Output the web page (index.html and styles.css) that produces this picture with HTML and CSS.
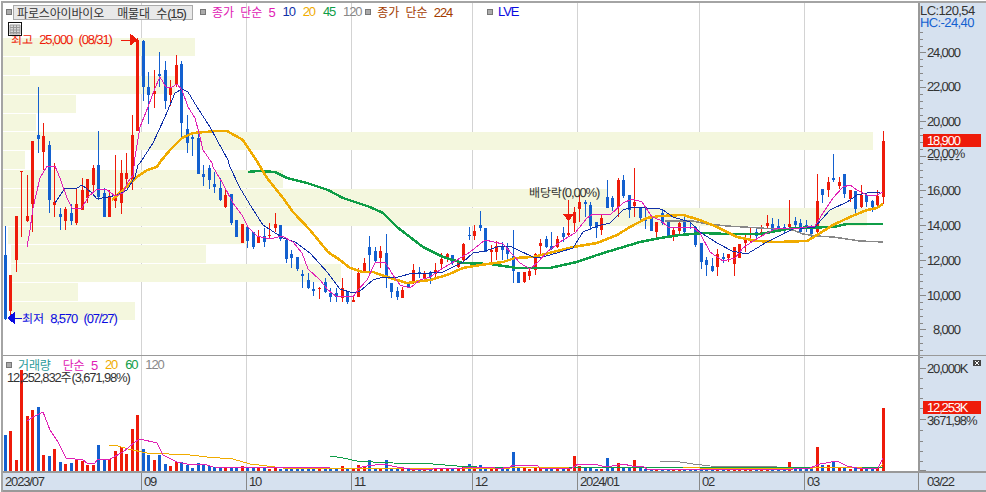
FILE: index.html
```html
<!DOCTYPE html>
<html lang="ko">
<head>
<meta charset="utf-8">
<title>파로스아이바이오 차트</title>
<link rel="stylesheet" href="styles.css">
</head>
<body>
<div class="chart">
  <section class="plot">
    <svg class="canvas" viewBox="3 3 915 352" width="915" height="352">
      <path class="grid" d="M141.5 3V355M246.5 3V355M351.5 3V355M472.5 3V355M577.5 3V355M699.5 3V355M804.5 3V355"/>
      <g class="profile">
        <rect x="3" y="38" width="192" height="18"/><rect x="3" y="57" width="27" height="18"/>
        <rect x="3" y="76" width="172" height="18"/><rect x="3" y="95" width="73" height="18"/>
        <rect x="3" y="114" width="33" height="17"/><rect x="3" y="132" width="870" height="18"/>
        <rect x="3" y="151" width="22" height="18"/><rect x="3" y="170" width="280" height="18"/>
        <rect x="3" y="189" width="604" height="18"/><rect x="3" y="208" width="864" height="18"/>
        <rect x="8" y="227" width="240" height="17"/><rect x="11" y="245" width="195" height="18"/>
        <rect x="11" y="264" width="330" height="18"/><rect x="11" y="283" width="67" height="18"/>
        <rect x="11" y="302" width="124" height="18"/>
      </g>
      <path class="wick blue" d="M5.5 226V320M38.5 87V153M49.5 141V213M60.5 208V230M71.5 204V225M98.5 131V200M104.5 188V217M143.5 40V101M148.5 72V124M159.5 52V87M165.5 61V109M181.5 61V139M187.5 115V153M192.5 133V156M198.5 133V174M203.5 165V186M209.5 165V189M214.5 172V193M220.5 178V201M231.5 194V225M247.5 227V248M253.5 232V249M264.5 228V247M280.5 225V241M286.5 240V263M291.5 250V268M297.5 257V271M302.5 270V288M308.5 273V289M313.5 282V296M325.5 278V293M330.5 288V302M336.5 288V302M347.5 292V304M369.5 236V271M375.5 247V263M386.5 234V288M391.5 283V298M397.5 287V300M408.5 282V288M419.5 267V278M430.5 271V284M452.5 255V265M469.5 227V240M480.5 211V231M485.5 228V252M502.5 242V260M507.5 243V260M513.5 230V283M518.5 272V283M546.5 236V248M551.5 232V250M563.5 227V242M585.5 200V217M590.5 202V230M596.5 222V238M607.5 180V208M612.5 196V211M623.5 175V198M629.5 195V218M640.5 207V223M645.5 207V229M651.5 215V231M662.5 209V225M668.5 221V237M684.5 215V235M690.5 220V229M695.5 226V247M701.5 243V269M706.5 257V276M712.5 258V272M723.5 253V263M756.5 228V241M772.5 218V233M778.5 219V232M784.5 224V234M795.5 217V229M800.5 219V233M806.5 220V232M811.5 225V238M822.5 189V203M833.5 154V182M844.5 174V198M855.5 191V213M866.5 193V207M872.5 200V212"/>
      <path class="body blue" d="M5.5 255V319M38.5 135V139M49.5 145V200M60.5 214V217M71.5 213V221M98.5 165V197M104.5 193V217M143.5 41V87M148.5 87V95M159.5 74V76M165.5 70V101M181.5 64V123M187.5 129V143M192.5 137V139M198.5 138V174M203.5 174V177M209.5 168V180M214.5 184V187M220.5 188V200M231.5 194V223M236.5 220V237M247.5 227V241M253.5 232V247M264.5 236V242M280.5 225V239M286.5 240V259M291.5 254V258M297.5 257V269M302.5 274V276M308.5 280V288M313.5 289V291M325.5 282V292M330.5 293V297M336.5 293V297M347.5 292V302M369.5 247V255M375.5 251V261M386.5 253V278M391.5 283V292M397.5 291V297M408.5 283V288M419.5 272V274M430.5 272V277M452.5 255V263M469.5 235V236M480.5 225V228M485.5 228V252M502.5 247V250M507.5 248V254M513.5 256V271M518.5 272V283M546.5 239V247M551.5 246V249M563.5 233V237M585.5 202V204M590.5 205V226M596.5 222V228M607.5 197V208M612.5 198V207M623.5 180V196M629.5 195V210M640.5 207V218M645.5 219V221M651.5 216V231M662.5 213V223M668.5 222V236M684.5 220V232M690.5 227V228M695.5 227V245M701.5 243V262M706.5 260V265M712.5 266V271M723.5 257V259M756.5 232V236M772.5 224V232M778.5 226V231M784.5 227V229M795.5 221V225M800.5 223V232M806.5 225V227M811.5 227V234M822.5 189V195M833.5 178V180M844.5 174V194M855.5 191V209M866.5 195V202M872.5 201V207"/>
      <path class="wick red" d="M10.5 275V317M16.5 216V272M21.5 171V237M27.5 175V222M32.5 141V232M43.5 123V170M54.5 163V217M65.5 207V230M76.5 188V225M82.5 178V210M87.5 179V203M93.5 165V192M109.5 190V217M115.5 155V208M121.5 160V214M126.5 153V188M132.5 115V190M137.5 38V131M154.5 70V108M170.5 80V106M176.5 55V87M225.5 188V208M258.5 230V243M269.5 223V239M275.5 213V232M319.5 287V299M342.5 278V302M353.5 295V302M358.5 268V297M364.5 258V273M380.5 246V268M402.5 287V298M413.5 264V284M424.5 271V282M435.5 263V277M441.5 253V268M447.5 253V262M458.5 259V268M463.5 243V263M474.5 225V240M491.5 245V262M496.5 241V260M524.5 272V283M529.5 268V280M535.5 253V275M540.5 239V254M557.5 236V248M568.5 200V237M574.5 207V232M579.5 195V222M601.5 215V235M618.5 178V217M634.5 168V217M656.5 222V237M673.5 227V241M679.5 220V236M717.5 249V276M728.5 254V262M734.5 247V276M739.5 244V258M745.5 235V252M750.5 227V243M761.5 225V236M767.5 215V229M789.5 200V229M817.5 174V233M828.5 177V197M839.5 177V189M850.5 190V202M861.5 185V208M877.5 190V206M883.5 131V204"/>
      <path class="body red" d="M10.5 275V311M16.5 216V260M21.5 171V172M27.5 216V221M32.5 141V204M43.5 136V152M54.5 202V205M65.5 209V221M76.5 204V223M82.5 190V210M87.5 179V198M93.5 168V185M109.5 196V217M115.5 197V201M121.5 173V203M126.5 173V179M132.5 135V180M137.5 40V131M154.5 91V94M170.5 88V95M176.5 65V84M225.5 195V207M242.5 224V243M258.5 236V243M269.5 235V236M275.5 224V228M319.5 288V289M342.5 288V298M353.5 300V302M358.5 273V297M364.5 263V272M380.5 251V258M402.5 290V298M413.5 270V282M424.5 274V278M435.5 270V274M441.5 259V264M447.5 254V259M458.5 261V267M463.5 244V260M474.5 231V236M491.5 250V252M496.5 246V252M524.5 272V282M529.5 271V276M535.5 254V270M540.5 243V246M557.5 239V247M568.5 233V235M574.5 212V223M579.5 202V209M601.5 218V230M618.5 180V207M634.5 202V206M656.5 222V232M673.5 230V236M679.5 223V231M717.5 254V267M728.5 254V258M734.5 247V264M739.5 244V258M745.5 240V243M750.5 233V234M761.5 232V234M767.5 223V226M789.5 224V227M817.5 201V232M828.5 182V190M839.5 182V186M850.5 190V199M861.5 195V207M877.5 196V205M883.5 141V197"/>
      <polyline class="line ma120" points="665,221 693,221 707,224 727,226 760,228 793,230 803,234 817,236 833,237 860,241 883,242"/>
      <polyline class="line ma60" points="248,172 257,171 275,172 287,178 307,183 328,190 343,198 370,207 383,213 397,227 423,247 443,257 463,263 490,264 517,268 550,268 577,262 597,255 620,248 640,242 660,238 680,235 703,233 727,234 760,234 793,228 833,227 847,224 883,224"/>
      <polyline class="line ma20" points="112,200 123,190 137,177 147,170 157,167 160,162 170,150 182,138 193,133 217,131 227,131 243,140 258,163 267,178 283,198 293,212 310,230 328,252 340,260 350,268 363,272 373,272 390,278 407,283 430,280 447,275 463,268 480,265 503,262 515,258 533,257 557,251 573,247 597,243 617,235 630,227 647,218 660,216 683,215 700,220 717,227 737,237 757,241 777,242 807,241 817,235 833,225 850,217 867,210 877,208 883,204"/>
      <polyline class="line ma10" points="55,203 65,188 77,188 82,185 92,193 97,199 108,197 117,195 127,190 135,177 138,165 140,163 153,143 165,117 175,93 182,89 188,92 197,107 210,127 217,140 228,160 230,167 240,188 252,208 263,225 283,238 295,242 310,253 328,273 340,289 353,293 360,291 373,280 383,277 398,277 413,273 430,273 443,272 463,262 473,253 485,251 500,246 510,246 518,250 533,257 543,257 560,252 573,248 583,232 597,226 610,223 623,210 633,207 647,208 660,209 663,210 673,217 690,222 700,232 717,243 732,251 747,254 757,248 767,242 783,234 793,229 815,227 830,210 847,202 857,195 867,193 880,192"/>
      <polyline class="line ma5" points="27,247 30,230 33,208 40,178 47,166 55,166 60,178 67,198 72,208 82,208 88,197 97,189 107,190 115,196 123,193 128,182 133,175 135,157 140,127 148,107 155,88 160,77 166,87 172,87 177,84 182,90 188,107 195,118 199,133 203,150 212,163 213,167 222,182 233,203 242,215 248,227 257,236 270,239 282,236 293,242 302,253 308,269 320,280 328,290 336,296 353,297 358,290 367,280 375,263 385,262 393,275 400,285 410,288 420,280 430,277 443,268 457,260 470,252 485,240 503,244 513,255 520,263 530,269 538,262 547,252 560,242 575,233 587,218 593,214 610,215 623,203 632,199 642,202 652,217 660,220 668,227 677,228 693,227 700,233 710,252 723,261 735,258 743,248 753,241 767,233 777,228 800,228 815,226 823,213 833,198 843,187 850,185 857,190 867,195 877,195 883,192"/>
      <path class="mark-red" d="M121 40.500H131M130 34L137 40L130 45ZM563 214H574L568.500 220Z"/>
      <path class="mark-blue" d="M14 318.500H22M14 313L8 318L14 323Z"/>
      <text class="note red-text" x="11" y="44"><tspan class="ko">최고</tspan> 25,000 (08/31)</text>
      <text class="note blue-text" x="22" y="323"><tspan class="ko">최저</tspan> 8,570 (07/27)</text>
      <text class="note dark-text" x="529" y="197"><tspan class="ko">배당락</tspan>(0,00%)</text>
    </svg>
    <div class="legend">
      <i class="dot"></i>
      <span class="name"><span class="ko">파로스아이바이오</span><span class="ko title-gap">매물대</span> <span class="ko">수</span>(15)</span>
      <i class="dot after-name"></i>
      <span class="c-magenta m-6"><span class="ko">종가</span> <span class="ko">단순</span> 5</span>
      <span class="c-navy m-8">10</span>
      <span class="c-orange m-8">20</span>
      <span class="c-green m-8">45</span>
      <span class="c-gray m-8">120</span>
      <i class="dot m-4"></i>
      <span class="c-brown m-6"><span class="ko">종가</span> <span class="ko">단순</span> 224</span>
      <i class="dot m-35"></i>
      <span class="c-blue m-5">LVE</span>
    </div>
    <svg class="table-icon" viewBox="0 0 14 14" width="14" height="14">
      <rect x=".5" y=".5" width="13" height="13" fill="#fff" stroke="#111"/>
      <path d="M2 3H12V12H2ZM2 5.500H12M2 8H12M2 10.500H12M5.500 3V12M8.500 3V12" fill="#d8d8d8" stroke="#999"/>
    </svg>
  </section>
  <aside class="axis">
    <svg class="canvas" viewBox="920 3 66 352" width="66" height="352">
      <path class="tick" d="M920 32h3M920 39h3M920 46h3M920 52.500h6M920 59h3M920 66h3M920 73h3M920 80h3M920 87.500h6M920 94h3M920 101h3M920 108h3M920 115h3M920 121.500h6M920 128h3M920 135h3M920 142h3M920 149h3M920 156.500h6M920 163h3M920 170h3M920 177h3M920 184h3M920 190.500h6M920 197h3M920 204h3M920 211h3M920 218h3M920 225.500h6M920 232h3M920 239h3M920 246h3M920 253h3M920 260.500h6M920 267h3M920 274h3M920 281h3M920 288h3M920 295.500h6M920 302h3M920 309h3M920 316h3M920 323h3M920 329.500h6M920 336h3M920 343h3M920 350h3"/>
      <text class="red-text label corner" x="920" y="15">LC:120,54</text>
      <text class="hc label corner" x="920" y="27">HC:-24,40</text>
      <text class="label" x="927" y="57">24,000</text>
      <text class="label" x="927" y="91">22,000</text>
      <text class="label" x="927" y="126">20,000</text>
      <text class="label" x="927" y="160">18,000</text>
      <text class="label" x="927" y="195">16,000</text>
      <text class="label" x="927" y="230">14,000</text>
      <text class="label" x="927" y="265">12,000</text>
      <text class="label" x="927" y="300">10,000</text>
      <text class="label" x="933" y="334">8,000</text>
      <rect class="flag" x="923" y="134" width="58" height="13"/>
      <text class="label white" x="927" y="145">18,900</text>
      <rect class="veil" x="926" y="147" width="40" height="12"/>
      <text class="red-text label" x="927" y="158">20,00%</text>
    </svg>
  </aside>
  <section class="plot lower">
    <svg class="canvas" viewBox="3 356 915 115" width="915" height="115">
      <path class="grid" d="M141.5 356V471M246.5 356V471M351.5 356V471M472.5 356V471M577.5 356V471M699.5 356V471M804.5 356V471"/>
      <path class="body blue" d="M5.5 435V471M38.5 407V471M49.5 456V471M60.5 462V471M71.5 463V471M98.5 445V471M104.5 460V471M143.5 449V471M148.5 455V471M159.5 455V471M165.5 464V471M181.5 462V471M187.5 465V471M192.5 468V471M198.5 463V471M203.5 464V471M209.5 466V471M214.5 467V471M220.5 467V471M231.5 468V471M236.5 468V471M247.5 467V471M253.5 467V471M264.5 467V471M280.5 469V471M286.5 468V471M291.5 468V471M297.5 468V471M302.5 468V471M308.5 468V471M313.5 468V471M325.5 469V471M330.5 469V471M336.5 469V471M347.5 469V471M369.5 460V471M375.5 468V471M386.5 460V471M391.5 468V471M397.5 469V471M408.5 469V471M419.5 469V471M430.5 469V471M452.5 469V471M469.5 464V471M480.5 465V471M485.5 468V471M502.5 469V471M507.5 469V471M513.5 452V471M518.5 468V471M546.5 469V471M551.5 469V471M563.5 469V471M585.5 468V471M590.5 468V471M596.5 469V471M607.5 458V471M612.5 468V471M623.5 468V471M629.5 468V471M640.5 468V471M645.5 469V471M651.5 469V471M662.5 469V471M668.5 469V471M684.5 469V471M690.5 469V471M695.5 469V471M701.5 468V471M706.5 469V471M712.5 469V471M723.5 469V471M756.5 469V471M772.5 469V471M778.5 469V471M784.5 469V471M795.5 469V471M800.5 469V471M806.5 469V471M811.5 469V471M822.5 465V471M833.5 462V471M844.5 468V471M855.5 468V471M866.5 469V471M872.5 469V471"/>
      <path class="body red" d="M10.5 431V471M16.5 460V471M21.5 370V471M27.5 416V471M32.5 410V471M43.5 455V471M54.5 449V471M65.5 464V471M76.5 460V471M82.5 461V471M87.5 465V471M93.5 465V471M109.5 459V471M115.5 451V471M121.5 447V471M126.5 454V471M132.5 429V471M137.5 415V471M154.5 460V471M170.5 466V471M176.5 462V471M225.5 467V471M242.5 466V471M258.5 468V471M269.5 469V471M275.5 467V471M319.5 469V471M342.5 466V471M353.5 469V471M358.5 465V471M364.5 466V471M380.5 468V471M402.5 469V471M413.5 468V471M424.5 469V471M435.5 469V471M441.5 468V471M447.5 469V471M458.5 469V471M463.5 467V471M474.5 468V471M491.5 468V471M496.5 469V471M524.5 468V471M529.5 469V471M535.5 468V471M540.5 468V471M557.5 469V471M568.5 469V471M574.5 456V471M579.5 466V471M601.5 469V471M618.5 463V471M634.5 460V471M656.5 469V471M673.5 469V471M679.5 469V471M717.5 469V471M728.5 469V471M734.5 469V471M739.5 469V471M745.5 469V471M750.5 469V471M761.5 469V471M767.5 468V471M789.5 462V471M817.5 447V471M828.5 465V471M839.5 468V471M850.5 469V471M861.5 469V471M877.5 468V471M883.5 408V471"/>
      <polyline class="vline v120" points="660,461 680,462 693,464 710,466 777,467 880,467"/>
      <polyline class="vline v60" points="330,456 343,458 357,461 373,462 393,463 433,464 457,466 477,467 883,467"/>
      <polyline class="vline v20" points="109,445 118,446 128,449 147,453 190,455 207,457 233,459 250,464 267,466 283,468 330,468 473,468 510,468 570,467 683,467 700,468 807,468 813,468 863,467 880,467 883,464"/>
      <polyline class="vline v5" points="27,421 33,417 43,412 50,430 58,442 66,458 83,460 87,463 95,463 98,459 110,459 123,452 135,442 140,439 157,443 163,455 177,462 187,464 207,465 213,467 330,468 357,468 367,466 383,464 397,467 410,469 433,469 463,468 480,467 493,467 497,469 510,467 513,465 537,465 540,468 572,468 578,464 593,464 607,467 623,464 632,466 643,466 647,469 743,469 793,469 810,468 820,464 837,461 847,466 857,468 878,468 883,458"/>
    </svg>
    <div class="legend low">
      <i class="dot"></i>
      <span class="c-teal m-6 ko">거래량</span>
      <span class="c-magenta m-12"><span class="ko">단순</span> 5</span>
      <span class="c-orange m-8">20</span>
      <span class="c-green m-8">60</span>
      <span class="c-gray m-8">120</span>
    </div>
    <div class="volume-note">12,252,832<span class="ko">주</span>(3,671,98%)</div>
  </section>
  <aside class="axis">
    <svg class="canvas" viewBox="920 356 66 115" width="66" height="115">
      <path class="tick" d="M920 357h3M920 368.500h6M920 378h3M920 388h3M920 398h3M920 408h3M920 419.500h6M920 430h3M920 441h3M920 451h3M920 461h3M920 470.500h6"/>
      <text class="label" x="927" y="373">20,000K</text>
      <rect class="flag" x="923" y="401" width="58" height="13"/>
      <text class="label white" x="927" y="412">12,253K</text>
      <text class="red-text label" x="927" y="425">3671,98%</text>
      <rect x="973" y="360" width="8" height="6" fill="#444"/>
      <path d="M975 361L979 365M979 361L975 365" stroke="#fff" fill="none"/>
    </svg>
  </aside>
  <footer class="dates">
    <span>2023/07</span><span>09</span><span>10</span><span>11</span><span>12</span><span>2024/01</span><span>02</span><span>03</span><span class="end">03/22</span>
  </footer>
</div>
</body>
</html>
```
FILE: styles.css
```css
html, body { margin: 0; padding: 0; background: #fff; }
body {
  width: 986px;
  height: 492px;
  overflow: hidden;
  font-family: "Liberation Sans", "Noto Sans CJK KR", sans-serif;
  font-size: 13px;
  letter-spacing: -1.15px;
  word-spacing: 4px;
}
.ko {
  font-family: "Noto Sans CJK KR", sans-serif;
  font-size: 12px;
  letter-spacing: -0.15px;
}
.chart {
  box-sizing: border-box;
  width: 985px;
  height: 491px;
  margin: 1px 0 0 1px;
  border-top: 2px solid #a4a4a4;
  border-left: 2px solid #a4a4a4;
  display: grid;
  grid-template-columns: 915px 68px;
  grid-template-rows: 352px 116px 21px;
}
.plot { position: relative; background: #fff; overflow: hidden; }
.plot.lower { border-top: 1px solid #999; }
.axis {
  background: #d6e1ef;
  border-left: 2px solid #999;
  overflow: hidden;
}
.axis:nth-of-type(2) { border-top: 1px solid #999; }
.canvas { display: block; shape-rendering: crispEdges; }
.canvas text { text-rendering: geometricPrecision; }

.grid { stroke: #d3d3d3; fill: none; }
.profile rect { fill: #f4f7de; }
.wick, .body { fill: none; }
.wick { stroke-width: 1; }
.body { stroke-width: 3; }
.blue { stroke: #1360cf; }
.red { stroke: #ee1b0a; }

.line, .vline { fill: none; }
.ma5 { stroke: #e020b4; stroke-width: 1; }
.ma10 { stroke: #1030a8; stroke-width: 1; }
.ma20 { stroke: #f0ab00; stroke-width: 2.5; }
.ma60 { stroke: #0f9d47; stroke-width: 2.5; }
.ma120 { stroke: #888; stroke-width: 1.5; }
.vline { stroke-width: 1; }
.v5 { stroke: #e020b4; }
.v20 { stroke: #f0ab00; }
.v60 { stroke: #0f9d47; }
.v120 { stroke: #888; }

.mark-red { fill: #ee1b0a; stroke: #ee1b0a; }
.mark-blue { fill: #0a0ae0; stroke: #0a0ae0; }
.note { font-size: 13px; }
.red-text { fill: #ee1b0a; }
.blue-text { fill: #0a0ae0; }
.dark-text { fill: #333; }

.legend {
  position: absolute;
  top: 1px;
  left: 3px;
  display: flex;
  align-items: center;
  height: 16px;
  white-space: nowrap;
  line-height: 14px;
}
.dot {
  width: 4px;
  height: 4px;
  background: #aaa;
  border: 1px solid #777;
  flex: none;
}
.name {
  box-sizing: border-box;
  width: 180px;
  height: 15px;
  margin-left: 1px;
  padding-left: 3px;
  background: #e9e9e9;
  border: 1px solid #aaa;
  color: #333;
}
.title-gap { margin-left: 13px; }
.after-name { margin-left: 7px; }
.m-4 { margin-left: 4px; }
.m-5 { margin-left: 5px; }
.m-6 { margin-left: 6px; }
.m-8 { margin-left: 8px; }
.m-12 { margin-left: 12px; }
.m-35 { margin-left: 35px; }
.c-magenta { color: #e020b4; }
.c-navy { color: #1030a8; }
.c-orange { color: #f0ab00; }
.c-green { color: #0f9d47; }
.c-gray { color: #888; }
.c-brown { color: #a33c00; }
.c-blue { color: #0a0ae0; }
.c-teal { color: #2a9a9a; }
.table-icon { position: absolute; left: 5px; top: 19px; }
.volume-note {
  position: absolute;
  left: 4px;
  top: 14px;
  color: #333;
  line-height: 14px;
  white-space: nowrap;
}

.tick { stroke: #888; fill: none; }
.label { fill: #333; font-size: 13px; }
.corner { letter-spacing: -0.6px; }
.hc { fill: #1360cf; }
.flag { fill: #ee1b0a; }
.white { fill: #fff; }
.veil { fill: #d6e1ef; }

.dates {
  grid-column: 1 / -1;
  display: grid;
  grid-template-columns: 139px 105px 105px 121px 105px 122px 105px 114px 67px;
  background: #d6e1ef;
  border-top: 2px solid #999;
  border-bottom: 2px solid #999;
  box-sizing: border-box;
  color: #333;
  line-height: 17px;
}
.dates span {
  box-sizing: border-box;
  border-right: 1px solid #888;
  padding-left: 2px;
}
.dates .end { border-right: 0; padding-left: 8px; }
```
